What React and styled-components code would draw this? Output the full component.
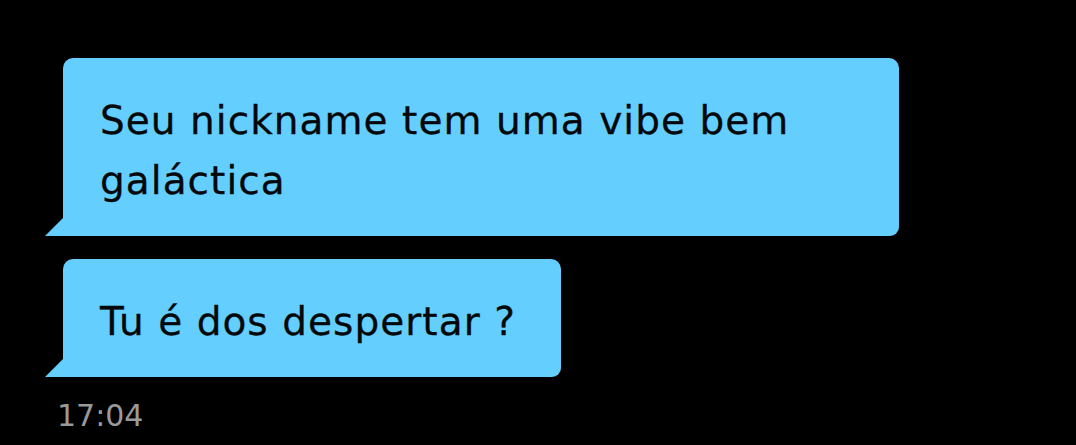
import React from 'react';
import styled, { createGlobalStyle } from 'styled-components';

const GlobalStyle = createGlobalStyle`
  html, body {
    margin: 0;
    padding: 0;
    background: #000;
  }
  body {
    width: 1076px;
    height: 445px;
    overflow: hidden;
    font-family: "DejaVu Sans", "Noto Sans", sans-serif;
  }
`;

const Chat = styled.div`
  display: flex;
  flex-direction: column;
  align-items: flex-start;
  gap: 23px;
  padding: 58px 0 0 63px;
`;

const Bubble = styled.div`
  position: relative;
  box-sizing: border-box;
  width: ${(p) => (p.$width ? `${p.$width}px` : 'fit-content')};
  padding: 33px 45px 25px 37px;
  background: #64cffe;
  border-radius: 10px 10px 9px 0;
  color: #05080a;
  font-size: 39px;
  line-height: 60px;
  letter-spacing: 1.05px;
  -webkit-text-stroke: 0.3px #05080a;

  &::before {
    content: '';
    position: absolute;
    left: -18px;
    bottom: 0;
    width: 18px;
    height: 18px;
    background: #64cffe;
    clip-path: polygon(100% 0, 100% 100%, 0 100%);
  }
`;

const Time = styled.div`
  margin: -2px 0 0 -6px;
  color: #9a9a9a;
  font-size: 30px;
  line-height: 36px;
`;

const App = () => (
  <>
    <GlobalStyle />
    <Chat>
      <Bubble $width={836}>Seu nickname tem uma vibe bem galáctica</Bubble>
      <Bubble>Tu é dos despertar ?</Bubble>
      <Time>17:04</Time>
    </Chat>
  </>
);

export default App;
